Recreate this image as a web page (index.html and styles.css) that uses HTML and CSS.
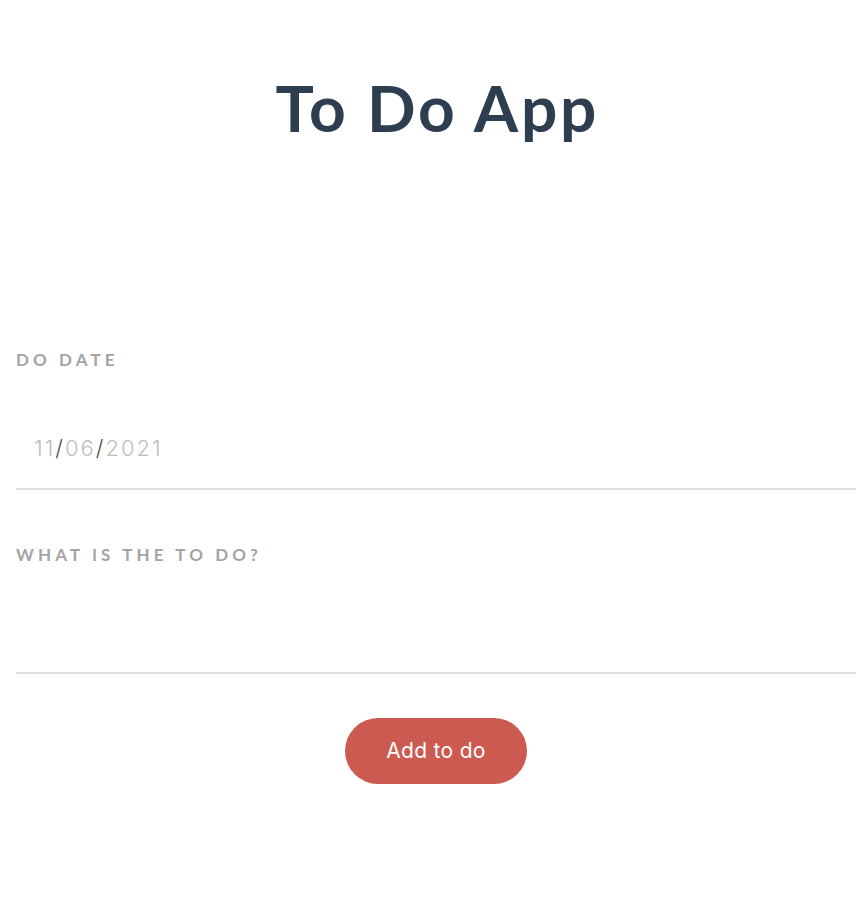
FILE: index.html
```html
<!DOCTYPE html>
<html lang="en">
<head>
<meta charset="utf-8">
<title>To Do App</title>
<link rel="stylesheet" href="styles.css">
</head>
<body>
<main class="app">
  <h1 class="title">To Do App</h1>
  <form class="todo-form">
    <div class="field field-date">
      <label class="field-label">Do Date</label>
      <div class="field-input date-input">
        <span class="seg">11</span><span class="sep">/</span><span class="seg">06</span><span class="sep">/</span><span class="seg">2021</span>
      </div>
    </div>
    <div class="field field-text">
      <label class="field-label">What is the to do?</label>
      <div class="field-input text-input"></div>
    </div>
    <div class="actions">
      <button type="button" class="add-btn">Add to do</button>
    </div>
  </form>
</main>
</body>
</html>
```
FILE: styles.css
```css
html, body {
  margin: 0;
  padding: 0;
  background: #ffffff;
}
body {
  font-family: "Lato", "Liberation Sans", sans-serif;
}
.app {
  padding: 70px 12px 0 16px;
}
.title {
  margin: 0;
  font-family: "Lato", sans-serif;
  font-weight: 700;
  font-size: 64px;
  line-height: 1.2;
  letter-spacing: 2.8px;
  text-indent: 2.8px;
  color: #2c3e50;
  text-align: center;
}
.todo-form {
  margin-top: 203px;
  display: flex;
  flex-direction: column;
}
.field-label {
  display: block;
  font-family: "Lato", sans-serif;
  font-weight: 700;
  font-size: 17px;
  line-height: 20px;
  letter-spacing: 4.1px;
  text-transform: uppercase;
  color: #a4a4a4;
}
.field-input {
  box-sizing: content-box;
  height: 80px;
  border-bottom: 2px solid #dddddd;
  padding: 0 18px;
  display: flex;
  align-items: center;
}
.field-date .field-input {
  margin-top: 38px;
}
.field-text {
  margin-top: 55px;
}
.field-text .field-input {
  margin-top: 27px;
}
.date-input {
  font-family: "Inter", "Roboto", sans-serif;
  font-size: 22px;
  font-weight: 300;
  letter-spacing: 2px;
  color: #bdbdbd;
}
.date-input .sep {
  color: #4a4a4a;
}
.actions {
  margin-top: 44px;
  display: flex;
  justify-content: center;
}
.add-btn {
  width: 182px;
  height: 66px;
  border: none;
  border-radius: 33px;
  background: #cc5a50;
  color: #ffffff;
  font-family: "Inter", "Roboto", sans-serif;
  font-size: 21px;
  letter-spacing: 0.3px;
  cursor: pointer;
}
```
